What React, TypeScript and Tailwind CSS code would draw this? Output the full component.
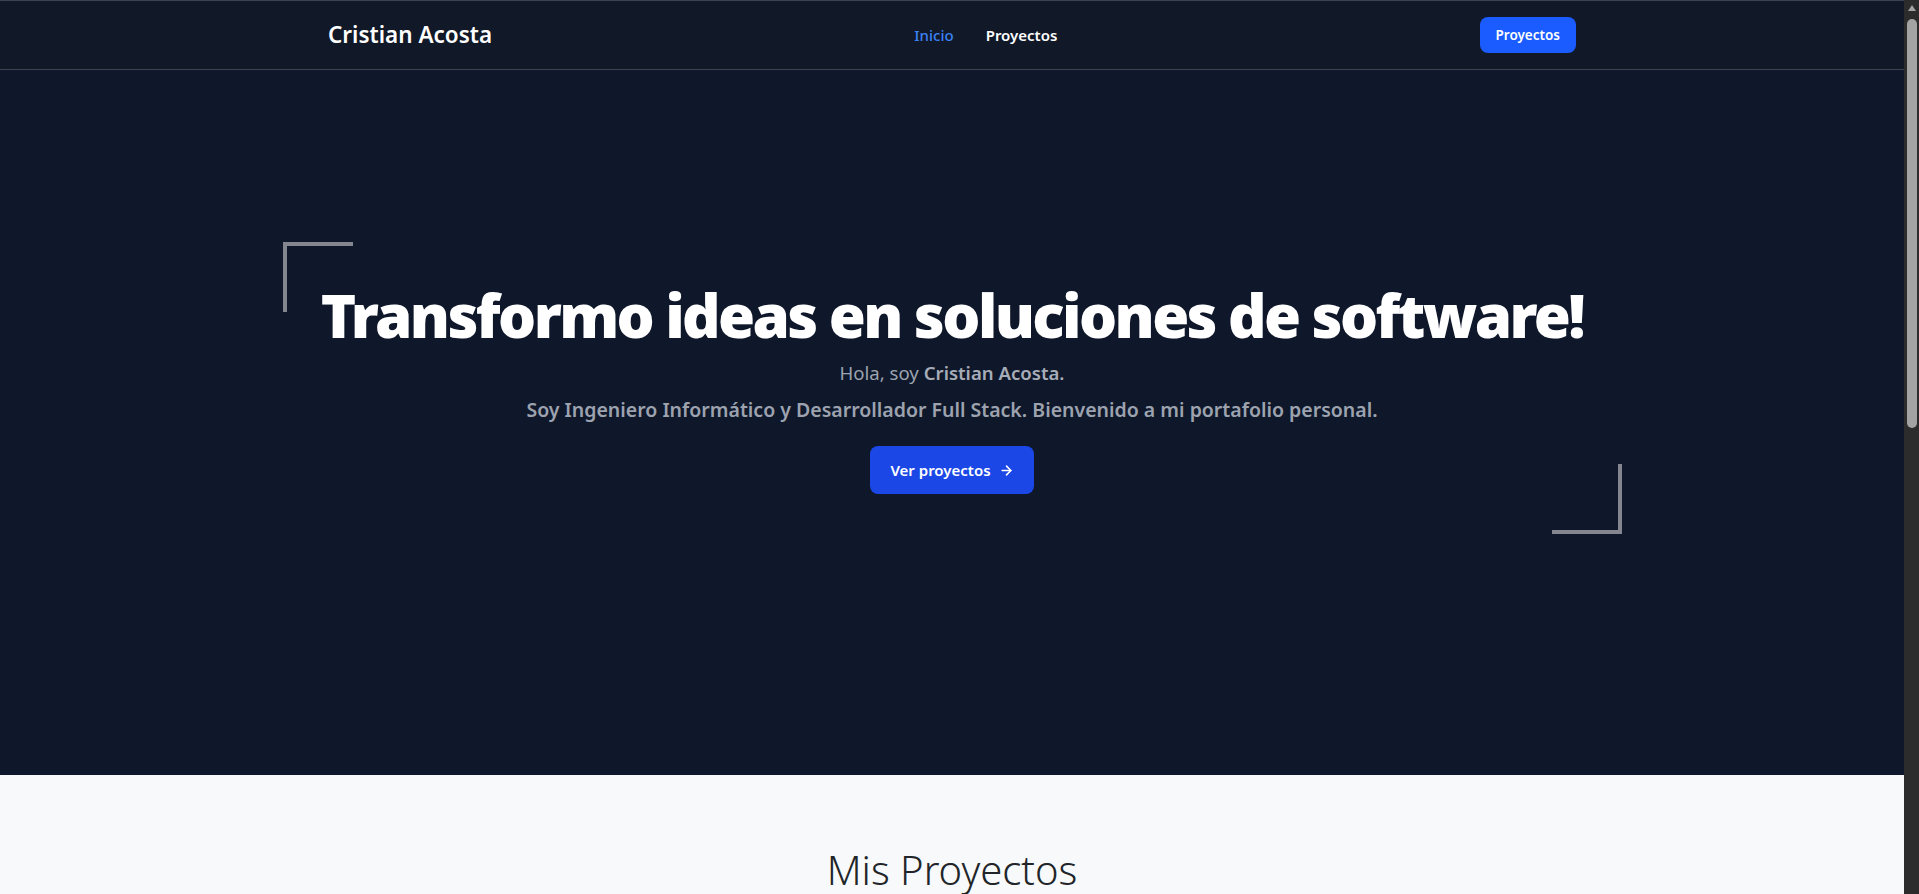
import React from "react";
import { ArrowRight } from "lucide-react";

const font = { fontFamily: '"Noto Sans", "Open Sans", Arial, sans-serif' };

export default function App() {
  return (
    <div className="flex h-[894px] w-full overflow-hidden" style={font}>
      <div className="flex min-w-0 flex-1 flex-col">
        <div className="h-px bg-[#3d4150]" />
        <nav className="h-[69px] shrink-0 border-b border-[#3c4250] bg-[#111827]">
          <div className="mx-auto flex h-full max-w-7xl items-center justify-between px-4">
            <span className="text-[22.5px] font-semibold text-white">Cristian Acosta</span>
            <div className="flex items-center gap-8 text-[15px]">
              <a className="font-medium text-[#3b82f6]">Inicio</a>
              <a className="font-semibold text-white">Proyectos</a>
            </div>
            <button className="rounded-lg bg-[#1a5cff] px-4 py-2 text-[13.5px] font-semibold leading-5 text-white">
              Proyectos
            </button>
          </div>
        </nav>
        <section className="h-[705px] shrink-0 bg-[#0f172a] pt-[172px]">
          <div className="relative mx-auto flex w-[1339px] flex-col items-center pb-[40px] pt-[43px] text-center">
            <span className="absolute left-0 top-0 h-[70px] w-[70px] border-l-4 border-t-4 border-[#83868f]" />
            <span className="absolute bottom-0 right-0 h-[70px] w-[70px] border-b-4 border-r-4 border-[#83868f]" />
            <h1 className="whitespace-nowrap text-6xl font-black tracking-[-2.6px] text-white">
              Transformo ideas en soluciones de software!
            </h1>
            <p className="mt-[14px] text-[18.6px] leading-7 text-[#9ca3af]">
              Hola, soy <span className="font-semibold text-[#a7adb8]">Cristian Acosta.</span>
            </p>
            <p className="mt-[9px] text-[19.5px] font-semibold leading-7 text-[#9ca3af]">
              Soy Ingeniero Informático y Desarrollador Full Stack. Bienvenido a mi portafolio personal.
            </p>
            <button className="mt-[22px] flex items-center gap-2 rounded-lg bg-[#1a47e5] px-5 py-3 text-[15px] font-semibold leading-6 text-white">
              Ver proyectos
              <ArrowRight className="h-[15px] w-[15px]" strokeWidth={2.5} />
            </button>
          </div>
        </section>
        <section className="flex-1 bg-[#f8f9fa] pt-[71px] text-center">
          <h2 className="text-[40px] font-light leading-[1.2] text-[#212529]">Mis Proyectos</h2>
        </section>
      </div>
      <div className="flex w-[15px] shrink-0 flex-col items-center bg-[#2c2c2c]">
        <svg width="10" height="8" viewBox="0 0 10 8" className="mt-[4px]">
          <polygon points="5,1 9,7 1,7" fill="#a3a3a3" />
        </svg>
        <div className="mt-[7px] h-[409px] w-[10px] rounded-full bg-[#a3a3a3]" />
      </div>
    </div>
  );
}
